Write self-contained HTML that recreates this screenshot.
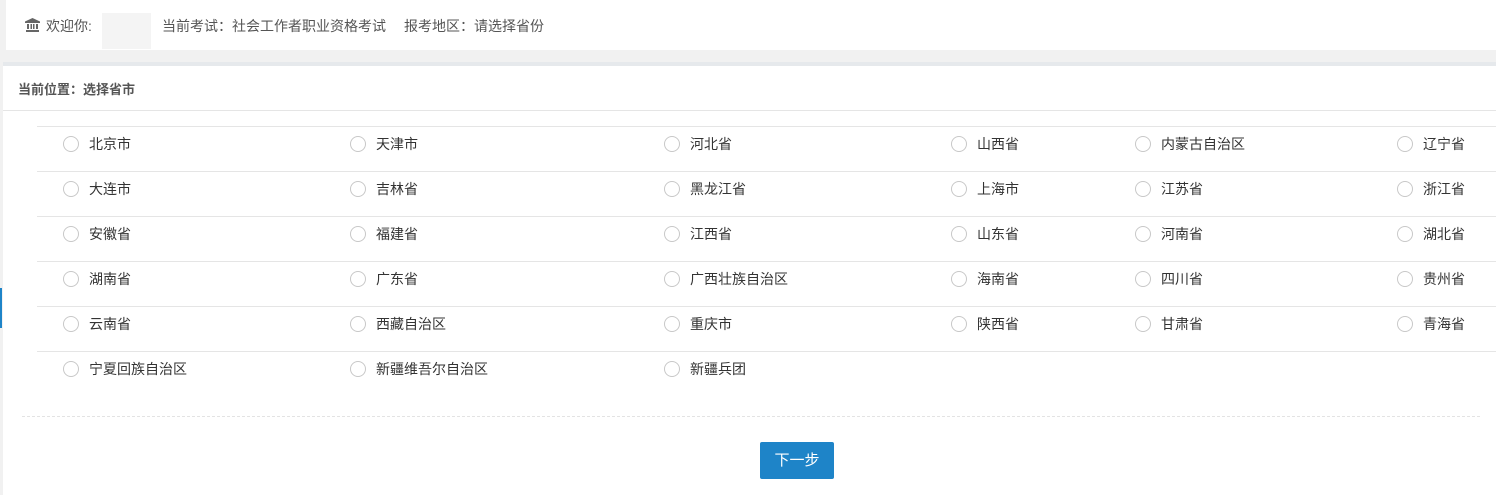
<!DOCTYPE html>
<html><head><meta charset="utf-8"><style>
*{margin:0;padding:0;box-sizing:border-box}
body{width:1496px;height:495px;background:#f1f1f1;font-family:"Liberation Sans","Noto Sans CJK SC",sans-serif;position:relative;overflow:hidden;font-size:13px;color:#333}
.hdr{position:absolute;left:6px;top:0;right:0;height:50px;background:#fff}
.hdr span{position:absolute;top:16px;color:#555;font-size:14px;white-space:nowrap}
.blur{position:absolute;left:102px;top:13px;width:49px;height:36px;background:#f4f4f4}
.band{position:absolute;left:3px;right:0;top:62px;height:4px;background:#e6e9ec}
.main{position:absolute;left:3px;right:0;top:66px;bottom:0;background:#fff}
.bc{position:absolute;left:18px;top:79px;font-weight:bold;color:#555;font-size:13px}
.bcl{position:absolute;left:3px;right:0;top:110px;height:1px;background:#e5e5e5}
.rl{position:absolute;left:37px;right:0;height:1px;background:#e5e5e5}
.r{position:absolute;width:16px;height:16px;border:1px solid #c8c8c8;border-radius:50%;background:#fff}
.t{position:absolute;font-size:14px;color:#333;white-space:nowrap}
.dash{position:absolute;left:22px;right:16px;top:416px;border-top:1px dashed #e3e3e3}
.btn{position:absolute;left:760px;top:442px;width:74px;height:37px;background:#1e84c8;border-radius:2px;color:#fff;font-size:15px;text-align:center;line-height:37px}
.blue{position:absolute;left:0;top:288px;width:2px;height:40px;background:#1e84c8}
</style></head><body>
<div class="hdr">
<svg style="position:absolute;left:19px;top:18px" width="15" height="14" viewBox="0 0 15 14"><path d="M7.5 0L0 3.5V5h15V3.5z M1 12h13v2H1z M2 6h2v5H2z M5.5 6h1.5v5H5.5z M8 6h1.5v5H8z M11 6h2v5h-2z" fill="#666"/></svg>
<span style="left:40px">欢迎你:</span>
<span style="left:156px">当前考试：社会工作者职业资格考试</span>
<span style="left:398px">报考地区：请选择省份</span>
</div>
<div class="blur"></div>
<div class="band"></div>
<div class="main"></div>
<div class="blue"></div>
<div class="bc">当前位置：选择省市</div>
<div class="bcl"></div>
<div id="g"></div>
<div class="dash"></div>
<div class="btn">下一步</div>
<script>
var d=[["北京市","天津市","河北省","山西省","内蒙古自治区","辽宁省"],["大连市","吉林省","黑龙江省","上海市","江苏省","浙江省"],["安徽省","福建省","江西省","山东省","河南省","湖北省"],["湖南省","广东省","广西壮族自治区","海南省","四川省","贵州省"],["云南省","西藏自治区","重庆市","陕西省","甘肃省","青海省"],["宁夏回族自治区","新疆维吾尔自治区","新疆兵团"]];
var xs=[63,350,664,951,1135,1397],h="";
d.forEach(function(r,i){var y=126+45*i;h+='<div class="rl" style="top:'+y+'px"></div>';
r.forEach(function(n,j){h+='<div class="r" style="left:'+xs[j]+'px;top:'+(y+10)+'px"></div><div class="t" style="left:'+(xs[j]+26)+'px;top:'+(y+8)+'px">'+n+'</div>';});});
document.getElementById("g").innerHTML=h;
</script>
</body></html>
